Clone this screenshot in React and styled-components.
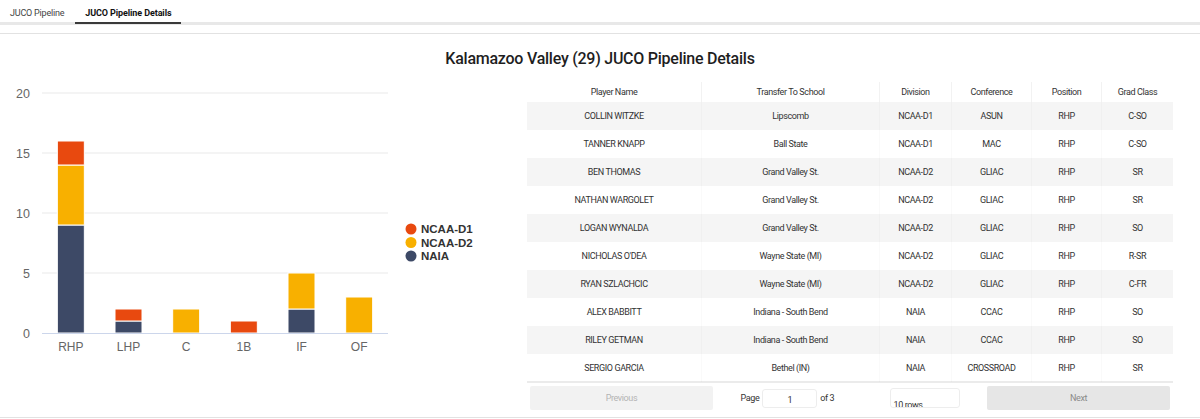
import styled, { createGlobalStyle } from "styled-components";

const GlobalStyle = createGlobalStyle`
  body {
    margin: 0;
    background: #ffffff;
    font-family: Roboto, "Liberation Sans", Arial, sans-serif;
    color: #333;
  }
`;

const COLORS = { d1: "#E8490F", d2: "#F8B000", naia: "#3D4966" };

const chartData = [
  { cat: "RHP", naia: 9, d2: 5, d1: 2 },
  { cat: "LHP", naia: 1, d2: 0, d1: 1 },
  { cat: "C", naia: 0, d2: 2, d1: 0 },
  { cat: "1B", naia: 0, d2: 0, d1: 1 },
  { cat: "IF", naia: 2, d2: 3, d1: 0 },
  { cat: "OF", naia: 0, d2: 3, d1: 0 },
];

const players = [
  ["COLLIN WITZKE", "Lipscomb", "NCAA-D1", "ASUN", "RHP", "C-SO"],
  ["TANNER KNAPP", "Ball State", "NCAA-D1", "MAC", "RHP", "C-SO"],
  ["BEN THOMAS", "Grand Valley St.", "NCAA-D2", "GLIAC", "RHP", "SR"],
  ["NATHAN WARGOLET", "Grand Valley St.", "NCAA-D2", "GLIAC", "RHP", "SR"],
  ["LOGAN WYNALDA", "Grand Valley St.", "NCAA-D2", "GLIAC", "RHP", "SO"],
  ["NICHOLAS O'DEA", "Wayne State (MI)", "NCAA-D2", "GLIAC", "RHP", "R-SR"],
  ["RYAN SZLACHCIC", "Wayne State (MI)", "NCAA-D2", "GLIAC", "RHP", "C-FR"],
  ["ALEX BABBITT", "Indiana - South Bend", "NAIA", "CCAC", "RHP", "SO"],
  ["RILEY GETMAN", "Indiana - South Bend", "NAIA", "CCAC", "RHP", "SO"],
  ["SERGIO GARCIA", "Bethel (IN)", "NAIA", "CROSSROAD", "RHP", "SR"],
];

const headers = ["Player Name", "Transfer To School", "Division", "Conference", "Position", "Grad Class"];
const colWidths = [175, 178, 72, 80, 70, 71];

const TabBar = styled.div`
  display: flex;
  align-items: flex-start;
  height: 22px;
  border-bottom: 3px solid #e8e8e8;
`;

const Tab = styled.div`
  box-sizing: border-box;
  height: 24px;
  padding: 0 ${(p) => (p.$active ? 10 : 11)}px 0 10px;
  line-height: 26px;
  font-size: 9px;
  letter-spacing: ${(p) => (p.$active ? -0.1 : -0.2)}px;
  font-weight: ${(p) => (p.$active ? 700 : 400)};
  color: ${(p) => (p.$active ? "#111" : "#444")};
  border-bottom: 2px solid ${(p) => (p.$active ? "#3a3a3a" : "transparent")};
`;

const Panel = styled.div`
  margin-top: 8px;
  height: 383px;
  border-top: 1px solid #e2e2e2;
  border-bottom: 1px solid #e2e2e2;
`;

const Title = styled.h2`
  margin: 0;
  padding-top: 13px;
  height: 24px;
  line-height: 24px;
  text-align: center;
  font-size: 16px;
  letter-spacing: -0.25px;
  font-weight: 500;
  color: #1e1e1e;
`;

const Body = styled.div`
  display: flex;
  padding-top: 9px;
`;

const ChartBox = styled.div`
  width: 527px;
  flex-shrink: 0;
`;

const TableWrap = styled.div`
  width: 646px;
  margin-top: 2px;
  font-size: 9px;
  letter-spacing: -0.4px;
  color: #333;
`;

const Row = styled.div`
  display: flex;
  height: ${(p) => (p.$head ? 20 : 28)}px;
  align-items: center;
  background: ${(p) => (p.$striped ? "#f5f5f5" : "transparent")};
`;

const Cell = styled.div`
  box-sizing: border-box;
  height: 100%;
  display: flex;
  align-items: center;
  justify-content: center;
  white-space: nowrap;
  border-right: 1px solid ${(p) => (p.$head ? "rgba(0,0,0,0.05)" : "rgba(0,0,0,0.02)")};
  &:last-child {
    border-right: none;
  }
`;

const Pagination = styled.div`
  display: flex;
  padding: 3px;
  border-top: 2px solid rgba(0, 0, 0, 0.08);
  margin-top: -1px;
`;

const PageButton = styled.div`
  flex: 1;
  height: 24px;
  line-height: 24px;
  text-align: center;
  border-radius: 2px;
  background: ${(p) => (p.$disabled ? "#f2f2f2" : "#e6e6e6")};
  color: ${(p) => (p.$disabled ? "#b4b4b4" : "#8a8a8a")};
`;

const PageCenter = styled.div`
  flex: 1.5;
  display: flex;
  align-items: center;
  justify-content: space-around;
`;

const PageInfo = styled.div`
  display: flex;
  align-items: center;
  color: #333;
`;

const PageInput = styled.div`
  box-sizing: border-box;
  width: 55px;
  height: 19px;
  margin: 0 3px;
  border: 1px solid rgba(0, 0, 0, 0.07);
  border-radius: 3px;
  text-align: center;
  line-height: 19px;
  padding-top: 1px;
`;

const SizeSelect = styled.div`
  box-sizing: border-box;
  width: 70px;
  height: 20px;
  border: 1px solid rgba(0, 0, 0, 0.07);
  border-radius: 3px;
  overflow: hidden;
  color: #333;
  padding: 10px 0 0 3px;
  line-height: 12px;
`;

function Chart() {
  const x0 = 42;
  const x1 = 388;
  const y0 = 253;
  const unit = 12;
  const step = (x1 - x0) / chartData.length;
  const barW = 27;
  const ticks = [0, 5, 10, 15, 20];
  return (
    <svg width="527" height="300" viewBox="0 0 527 300">
      {ticks.map((t) => (
        <g key={t}>
          {t > 0 && <line x1={x0} x2={x1} y1={y0 - t * unit} y2={y0 - t * unit} stroke="#e9e9e9" strokeWidth="1" />}
          <text x="30" y={y0 - t * unit + 4.5} textAnchor="end" fontFamily="'Liberation Sans', Arial, sans-serif" fontSize="12.5" fill="#666">
            {t}
          </text>
        </g>
      ))}
      {chartData.map((d, i) => {
        const bx = x0 + step * (i + 0.5) - barW / 2;
        let acc = 0;
        const segs = [];
        ["naia", "d2", "d1"].forEach((k) => {
          if (d[k] > 0) {
            const top = y0 - (acc + d[k]) * unit;
            segs.push(
              <rect key={k} x={bx} y={top} width={barW} height={d[k] * unit} fill={COLORS[k]} stroke="#fff" strokeWidth="1" />
            );
            acc += d[k];
          }
        });
        return (
          <g key={d.cat}>
            {segs}
            <text x={bx + barW / 2} y={y0 + 18} textAnchor="middle" fontFamily="'Liberation Sans', Arial, sans-serif" fontSize="12" fill="#666">
              {d.cat}
            </text>
          </g>
        );
      })}
      <line x1={x0} x2={x1} y1={y0 + 0.5} y2={y0 + 0.5} stroke="#ccd6eb" strokeWidth="1" />
      {[
        ["NCAA-D1", "d1", 149],
        ["NCAA-D2", "d2", 162.5],
        ["NAIA", "naia", 176],
      ].map(([label, k, cy]) => (
        <g key={k}>
          <circle cx="411" cy={cy} r="5.5" fill={COLORS[k]} />
          <text x="421" y={cy + 4} fontFamily="'Liberation Sans', Arial, sans-serif" fontSize="11.5" fontWeight="700" fill="#333">
            {label}
          </text>
        </g>
      ))}
    </svg>
  );
}

export default function App() {
  return (
    <>
      <GlobalStyle />
      <TabBar>
        <Tab>JUCO Pipeline</Tab>
        <Tab $active>JUCO Pipeline Details</Tab>
      </TabBar>
      <Panel>
        <Title>Kalamazoo Valley (29) JUCO Pipeline Details</Title>
        <Body>
          <ChartBox>
            <Chart />
          </ChartBox>
          <TableWrap>
            <Row $head>
              {headers.map((h, i) => (
                <Cell key={h} $head style={{ width: colWidths[i] }}>
                  {h}
                </Cell>
              ))}
            </Row>
            {players.map((p, r) => (
              <Row key={p[0]} $striped={r % 2 === 0}>
                {p.map((v, i) => (
                  <Cell key={i} style={{ width: colWidths[i] }}>
                    {v}
                  </Cell>
                ))}
              </Row>
            ))}
            <Pagination>
              <PageButton $disabled>Previous</PageButton>
              <PageCenter>
                <PageInfo>
                  Page <PageInput>1</PageInput> of 3
                </PageInfo>
                <SizeSelect>10 rows</SizeSelect>
              </PageCenter>
              <PageButton>Next</PageButton>
            </Pagination>
          </TableWrap>
        </Body>
      </Panel>
    </>
  );
}
